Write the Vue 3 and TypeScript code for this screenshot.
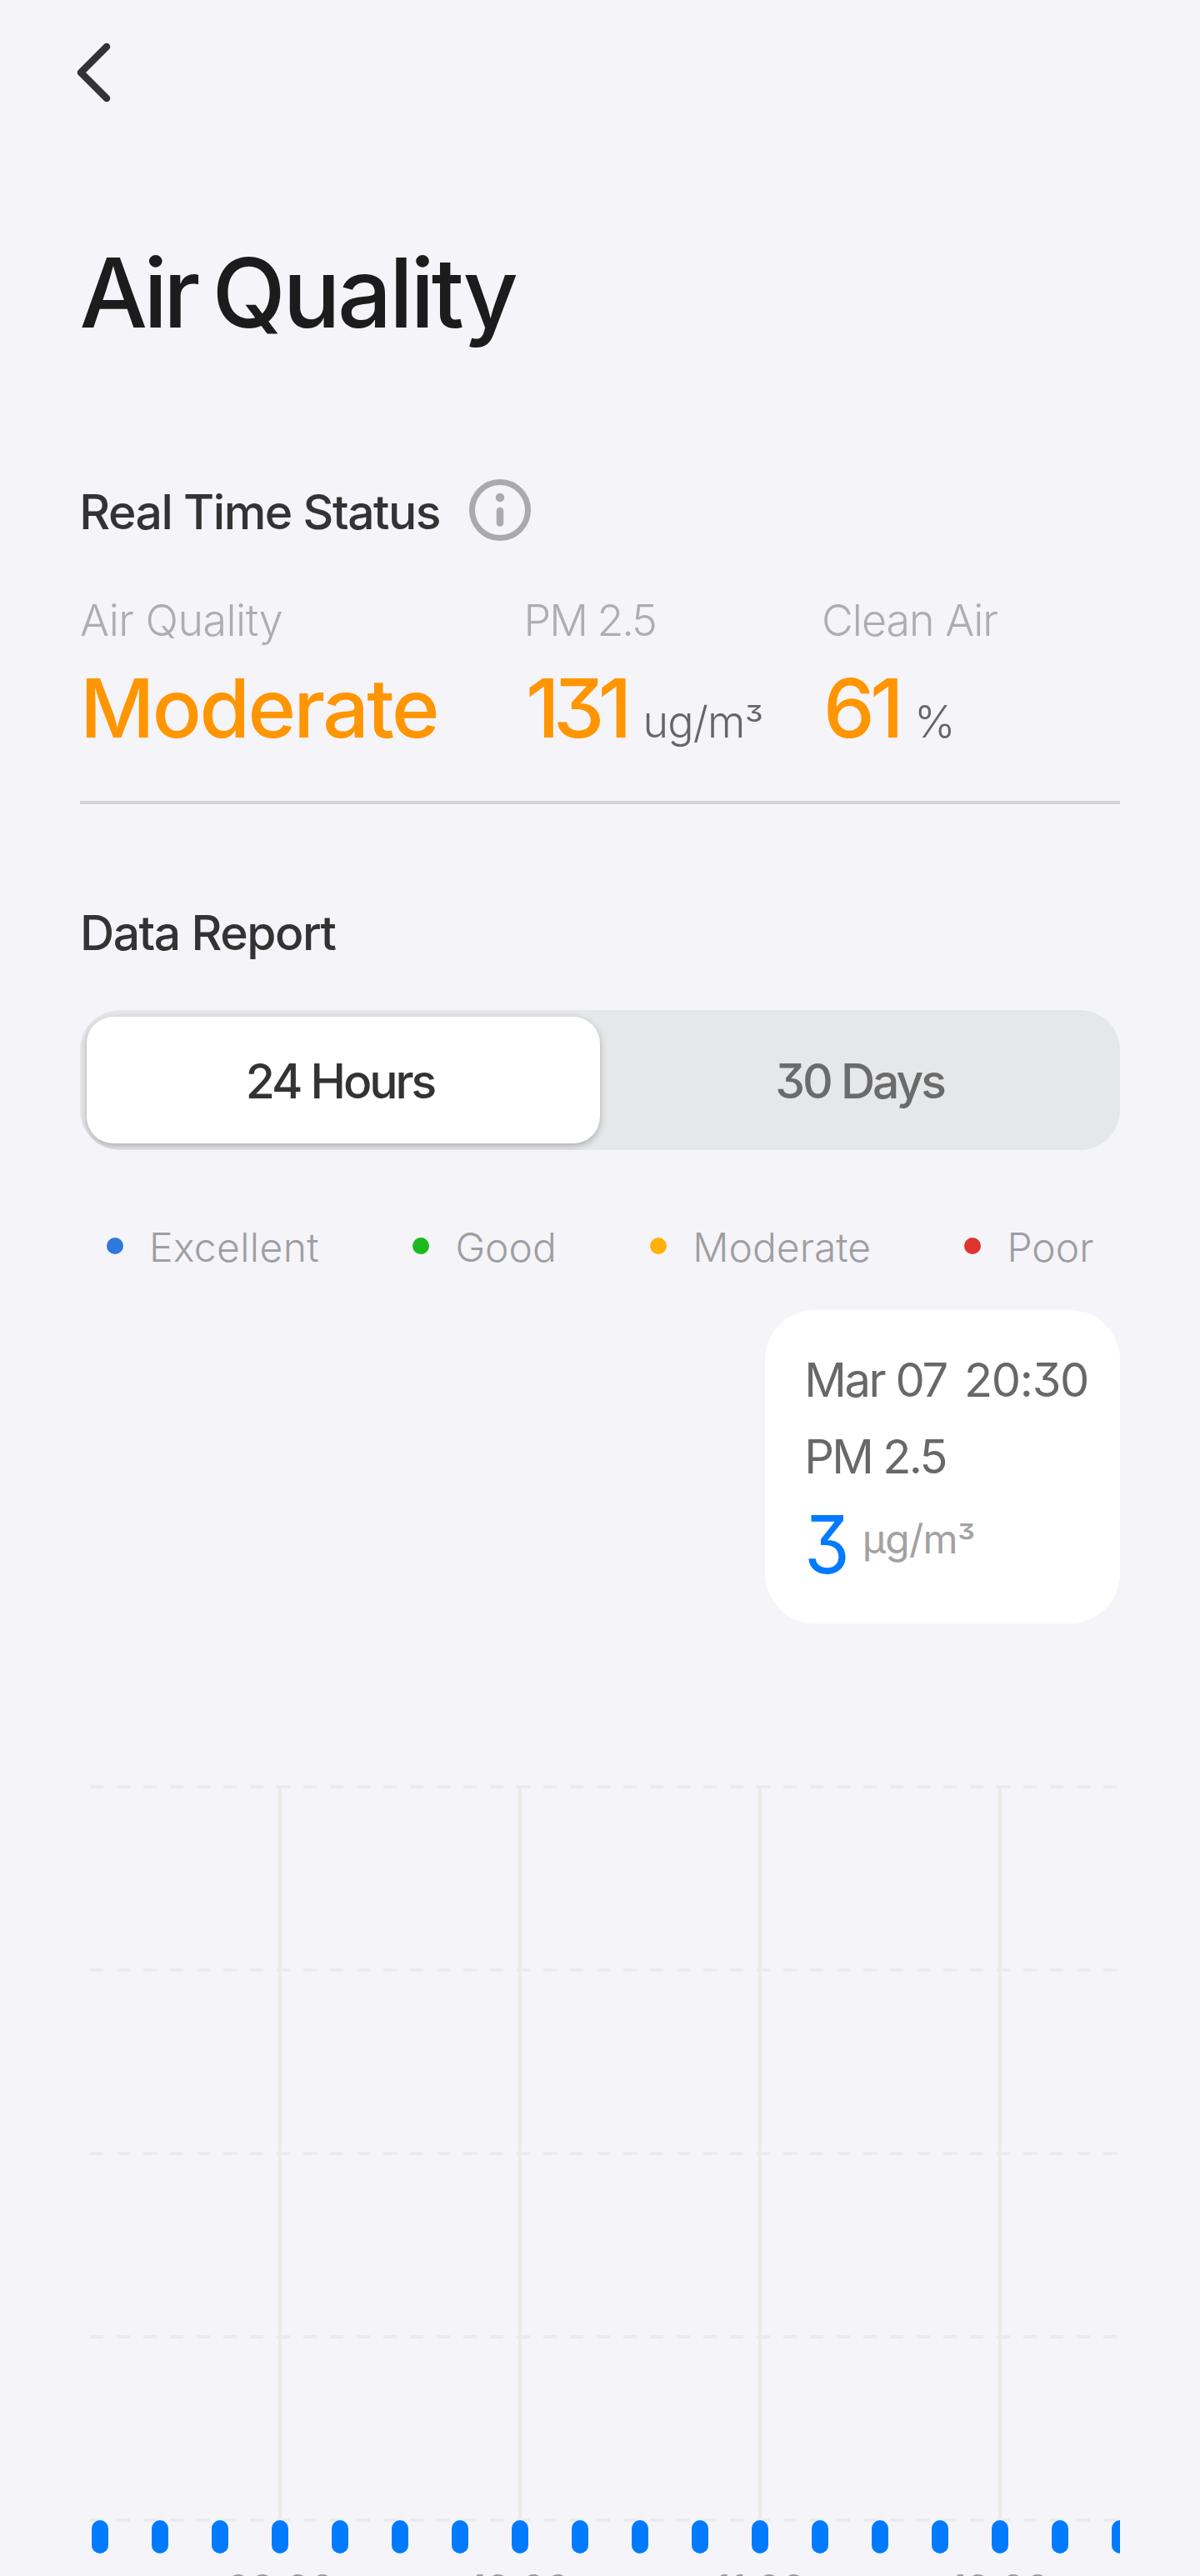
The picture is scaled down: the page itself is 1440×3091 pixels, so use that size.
<script setup lang="ts">
import { ref } from 'vue'

interface Metric { id: string; label: string; value: string; unit?: string; power?: string }
interface Level { name: string; color: string }

const metrics: Metric[] = [
  { id: 'quality', label: 'Air Quality', value: 'Moderate' },
  { id: 'pm', label: 'PM 2.5', value: '131', unit: 'ug/m', power: '³' },
  { id: 'clean', label: 'Clean Air', value: '61', unit: '%' },
]

const levels: Level[] = [
  { name: 'Excellent', color: '#2f78dc' },
  { name: 'Good', color: '#1cb91c' },
  { name: 'Moderate', color: '#ffb10a' },
  { name: 'Poor', color: '#df352e' },
]

const range = ref<'day' | 'month'>('day')

const rows = [2, 222, 442, 662, 882]
const hours = ['09:00', '10:00', '11:00', '12:00'].map((text, i) => ({ text, x: 240 + i * 288 }))
const bars = Array.from({ length: 18 }, (_, i) => 14 + i * 72)
</script>

<template>
  <main class="page">
    <button class="back" aria-label="Back">
      <svg width="48" height="80" viewBox="0 0 48 80">
        <path d="M40 8 9 39 40 70" />
      </svg>
    </button>

    <h1><span class="tight">Air</span> Quality</h1>

    <section class="status">
      <div class="status-head">
        <h2>Real Time Status</h2>
        <svg class="info" width="74" height="74" viewBox="0 0 74 74">
          <circle class="ring" cx="37" cy="37" r="33.5" />
          <circle class="dot" cx="37" cy="22" r="5.2" />
          <path class="stem" d="M37 38v14.5" />
        </svg>
      </div>
      <div class="metrics">
        <div v-for="m in metrics" :key="m.id" class="metric" :class="m.id">
          <div class="label">{{ m.label }}</div>
          <div class="reading">
            <span class="value">{{ m.value }}</span>
            <span v-if="m.unit" class="unit">{{ m.unit }}<span v-if="m.power" class="power">{{ m.power }}</span></span>
          </div>
        </div>
      </div>
    </section>

    <section class="report">
      <h2>Data Report</h2>
      <div class="tabs">
        <button class="first" :class="{ active: range === 'day' }" @click="range = 'day'">24 Hours</button>
        <button class="second" :class="{ active: range === 'month' }" @click="range = 'month'">30 Days</button>
      </div>

      <ul class="legend">
        <li v-for="l in levels" :key="l.name" :class="l.name.toLowerCase()">
          <i :style="{ background: l.color }"></i>
          <span>{{ l.name }}</span>
        </li>
      </ul>

      <div class="card">
        <div class="line when"><span class="date">Mar 07</span><span class="time">20:30</span></div>
        <div class="line kind">PM 2.5</div>
        <div class="amount"><span class="num">3</span><span class="per">µg/m<span class="power">³</span></span></div>
      </div>

      <svg class="chart" width="1248" height="949" viewBox="0 0 1248 949">
        <line v-for="y in rows" :key="y" class="row" x1="12" :y1="y" x2="1248" :y2="y" />
        <line v-for="h in hours" :key="h.x" class="col" :x1="h.x" y1="0" :x2="h.x" y2="884" />
        <rect v-for="x in bars" :key="x" class="bar" :x="x" y="882" width="20" height="40" rx="10" />
        <text v-for="h in hours" :key="h.text" :x="h.x" y="982">{{ h.text }}</text>
      </svg>
    </section>
  </main>
</template>

<style>
body { background: #f5f4f9; }
</style>

<style scoped>
.page {
  box-sizing: border-box;
  width: 1440px;
  height: 3091px;
  padding: 48px 96px 0;
  overflow: hidden;
  background: #f5f4f9;
  color: #333;
  font-family: Inter, "Liberation Sans", sans-serif;
  font-feature-settings: "cv09", "calt" 0;
}
h1, h2, ul { margin: 0; padding: 0; font-weight: 500; }
button { border: 0; padding: 0; background: none; color: inherit; font: inherit; font-feature-settings: inherit; }
.back { display: block; margin-left: -8px; height: 80px; }
.back svg { display: block; }
.back path { fill: none; stroke: #333; stroke-width: 8.5; stroke-linecap: round; stroke-linejoin: round; }
h1 {
  margin: 165.7px 0 0 -0.5px;
  font-size: 115px;
  line-height: 115px;
  letter-spacing: -3.5px;
  word-spacing: -8px;
  color: #1c1c1c;
}
.tight { letter-spacing: -5.2px; }
h2 { font-size: 57px; line-height: 57px; letter-spacing: -1.46px; white-space: nowrap; }

.status { margin-top: 166.3px; border-bottom: 4px solid #d3d3d5; padding-bottom: 61.9px; }
.status-head { display: flex; align-items: flex-start; height: 74px; }
.status-head h2 { margin: 10.8px 0 0 -0.8px; width: 467.8px; }
.info .ring { fill: none; stroke: #a9aaac; stroke-width: 7; }
.info .dot { fill: #a9aaac; }
.info .stem { stroke: #a9aaac; stroke-width: 8.5; stroke-linecap: round; }

.metrics { display: grid; grid-template-columns: 532px 358px 1fr; margin-top: 70px; }
.label {
  font-size: 52px;
  line-height: 52px;
  font-weight: 300;
  letter-spacing: -0.54px;
  color: #aeaeae;
}
.pm .label { margin-left: 0.6px; letter-spacing: -2.1px; }
.clean .label { letter-spacing: -1.05px; }
.reading { display: flex; align-items: baseline; height: 98px; margin-top: 30.1px; line-height: 98px; }
.value { font-size: 98px; font-weight: 500; letter-spacing: -2.6px; color: #ff9500; }
.pm .value { width: 140.6px; margin-left: 3px; letter-spacing: -7.8px; }
.clean .value { width: 109px; margin-left: 2px; letter-spacing: -5.8px; }
.unit { font-size: 52px; font-weight: 300; letter-spacing: -0.86px; color: #666; }
.clean .unit { font-size: 53px; }
.power { line-height: 0; vertical-align: -4px; }

.report { margin-top: 125.8px; }
.tabs {
  display: flex;
  gap: 8px;
  box-sizing: border-box;
  height: 168px;
  margin-top: 64.2px;
  padding: 8px;
  border-radius: 48px;
  overflow: hidden;
  background: #e6e7e9;
}
.tabs button {
  flex: 1;
  border-radius: 32px;
  padding-top: 4px;
  font-size: 57px;
  line-height: 57px;
  font-weight: 500;
  letter-spacing: -3.05px;
  color: #6b6b6b;
}
.tabs .first { flex: 0 0 616px; padding-right: 8px; }
.tabs .second { padding-right: 1px; }
.tabs .active { background: #fff; color: #333; box-shadow: 0 3px 9px rgba(0, 0, 0, 0.25); }

.legend { display: flex; justify-content: space-between; height: 48px; margin-top: 92.6px; padding: 0 31.5px 0 32px; list-style: none; }
.legend li { display: flex; align-items: center; gap: 31px; font-size: 48px; line-height: 48px; font-weight: 300; letter-spacing: 0; color: #9e9ea2; }
.legend .excellent { letter-spacing: 0.4px; }
.legend i { width: 20px; height: 20px; margin-bottom: 4px; border-radius: 50%; }

.card {
  box-sizing: border-box;
  width: 426px;
  height: 376px;
  margin: 51.4px 0 0 auto;
  padding: 55.8px 0 0 47.3px;
  border-radius: 60px;
  background: #fff;
}
.line { font-size: 56px; line-height: 56px; color: #686868; white-space: nowrap; }
.when { display: flex; }
.date { width: 191.7px; letter-spacing: -2.4px; }
.time { letter-spacing: -1.3px; }
.kind { margin-top: 36px; letter-spacing: -2.7px; }
.amount { display: flex; margin-top: 29.7px; }
.num { width: 69.5px; font-size: 96px; line-height: 96px; color: #007aff; transform: scaleX(0.92); transform-origin: left; }
.per { margin-top: 17.1px; font-size: 48px; line-height: 48px; letter-spacing: -0.73px; color: #a2a2a2; }

.chart { display: block; margin-top: 194px; }
.row { stroke: #ebebed; stroke-width: 4; stroke-dasharray: 16 16; }
.col { stroke: #ebebeb; stroke-width: 4; }
.bar { fill: #007aff; }
.chart text { font-size: 48px; letter-spacing: -0.8px; text-anchor: middle; fill: #9b9b9f; }
</style>
